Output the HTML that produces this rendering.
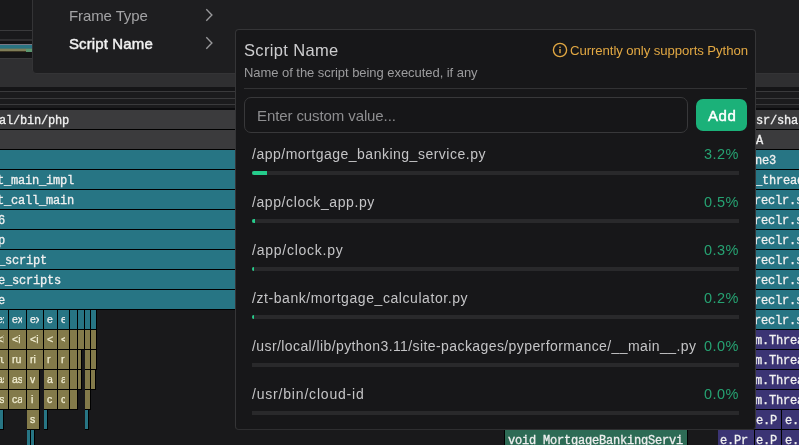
<!DOCTYPE html>
<html><head><meta charset="utf-8">
<style>
html,body{margin:0;padding:0;}
body{width:799px;height:445px;overflow:hidden;position:relative;background:#19191b;font-family:"Liberation Sans",sans-serif;}
.abs{position:absolute;}
.hl{position:absolute;left:0;width:799px;height:1px;background:#3a3a3c;}
.b{position:absolute;height:19px;border-right:1px solid #000;border-bottom:1px solid #000;}
.b .m{position:absolute;top:2px;height:19px;line-height:19px;white-space:pre;font-family:"Liberation Mono",monospace;font-size:12px;letter-spacing:-0.2px;color:#f0f0f0;will-change:transform;-webkit-text-stroke:0.3px #f0f0f0;}
.b .s{position:absolute;top:0px;height:19px;line-height:19px;white-space:pre;overflow:hidden;font-family:"Liberation Sans",sans-serif;font-size:10.5px;color:#f0f0f0;will-change:transform;-webkit-text-stroke:0.25px #f0f0f0;}
.b .o{color:#f2eed2;-webkit-text-stroke-color:#f2eed2;}
.b{overflow:hidden;}
#menu{position:absolute;left:32px;top:-10px;width:800px;height:82px;background:#1e1e20;border:1px solid #343436;border-radius:4px;}
.mi{position:absolute;left:69px;font-size:15px;white-space:nowrap;}
.chev{position:absolute;left:204px;}
#pop{position:absolute;left:235px;top:29px;width:519px;height:399px;background:#171719;border:1px solid #353537;border-bottom-color:#2e2e30;border-radius:4px;}
.t{position:absolute;white-space:nowrap;will-change:transform;}
.row{position:absolute;left:252px;width:487px;height:48px;}
.row .nm{position:absolute;left:0;font-size:14.5px;color:#c4c4c6;white-space:nowrap;}
.row .pc{position:absolute;right:0;font-size:14.5px;color:#26a272;white-space:nowrap;}
.row .tr{position:absolute;left:0;width:487px;height:4px;background:#29292b;border-radius:2px;overflow:hidden;}
.row .fl{position:absolute;left:0;top:0;height:4px;background:#25cd8c;border-radius:2px;}
</style></head><body>
<!-- minimap lines -->
<div class="hl" style="top:30px"></div>
<div class="hl" style="top:39px;height:2px;background:#2f2f31"></div>
<div class="abs" style="left:0;top:41px;width:799px;height:3px;background:#141416"></div>
<div class="hl" style="top:44px;background:#7a7884"></div>
<div class="abs" style="left:0;top:45px;width:799px;height:3px;background:#2a7482"></div>
<div class="abs" style="left:0;top:48px;width:799px;height:1px;background:#4a766e"></div>
<div class="abs" style="left:0;top:49px;width:26px;height:2px;background:#7f7d58"></div>
<div class="abs" style="left:26px;top:49px;width:10px;height:3px;background:#5b9670"></div>
<div class="abs" style="left:0;top:51px;width:26px;height:1px;background:#3a3422"></div>
<div class="abs" style="left:0;top:52px;width:799px;height:6px;background:#141416"></div>
<div class="hl" style="top:58px"></div>
<div class="abs" style="left:0;top:59px;width:799px;height:28px;background:#2f2f31"></div>
<div class="abs" style="left:0;top:87px;width:799px;height:22px;background:#1b1b1d"></div>
<div class="abs" style="left:0;top:87px;width:799px;height:4px;background:#151517"></div>
<div class="hl" style="top:91px"></div>
<div class="hl" style="top:98px"></div>
<div class="hl" style="top:104px"></div>
<div class="abs" style="left:0;top:108px;width:799px;height:2px;background:#0c0c0e"></div>
<div class="abs" style="left:0;top:110px;width:799px;height:335px;background:#19191b"></div>
<!-- flame blocks -->
<div class="b" style="left:-10px;top:110px;width:245px;background:#3b3b3d"><span class="m" style="left:9px">al/bin/php</span></div>
<div class="b" style="left:-10px;top:130px;width:245px;background:#3b3b3d"></div>
<div class="b" style="left:-10px;top:150px;width:245px;background:#277584"></div>
<div class="b" style="left:-10px;top:170px;width:245px;background:#277584"><span class="m" style="left:7px">t_main_impl</span></div>
<div class="b" style="left:-10px;top:190px;width:245px;background:#277584"><span class="m" style="left:7px">t_call_main</span></div>
<div class="b" style="left:-10px;top:210px;width:245px;background:#277584"><span class="m" style="left:7.5px">6</span></div>
<div class="b" style="left:-10px;top:230px;width:245px;background:#277584"><span class="m" style="left:7.5px">p</span></div>
<div class="b" style="left:-10px;top:250px;width:245px;background:#277584"><span class="m" style="left:7.5px">_script</span></div>
<div class="b" style="left:-10px;top:270px;width:245px;background:#277584"><span class="m" style="left:7.5px">e_scripts</span></div>
<div class="b" style="left:-10px;top:290px;width:245px;background:#277584"><span class="m" style="left:7.5px">e</span></div>
<div class="b" style="left:-10px;top:310px;width:18px;background:#277584"><span class="s" style="left:6.5px;width:6.5px">ex</span></div>
<div class="b" style="left:9px;top:310px;width:17px;background:#277584"><span class="s" style="left:2.5px;width:9.5px">ex</span></div>
<div class="b" style="left:27px;top:310px;width:16px;background:#277584"><span class="s" style="left:2.5px;width:8.5px">ex</span></div>
<div class="b" style="left:44px;top:310px;width:13px;background:#277584"><span class="s" style="left:2.5px;width:5.5px">e</span></div>
<div class="b" style="left:58px;top:310px;width:11px;background:#277584"><span class="s" style="left:2.5px;width:3.5px">e</span></div>
<div class="b" style="left:70px;top:310px;width:7px;background:#277584"></div>
<div class="b" style="left:78px;top:310px;width:6px;background:#277584"></div>
<div class="b" style="left:85px;top:310px;width:5px;background:#277584"></div>
<div class="b" style="left:91px;top:310px;width:5px;background:#277584"></div>
<div class="b" style="left:-10px;top:330px;width:18px;background:#837a4a"><span class="s o" style="left:6.5px;width:6.5px">&lt;i</span></div>
<div class="b" style="left:9px;top:330px;width:17px;background:#837a4a"><span class="s o" style="left:2.5px;width:9.5px">&lt;i</span></div>
<div class="b" style="left:27px;top:330px;width:16px;background:#837a4a"><span class="s o" style="left:2.5px;width:8.5px">&lt;i</span></div>
<div class="b" style="left:44px;top:330px;width:13px;background:#837a4a"><span class="s o" style="left:2.5px;width:5.5px">&lt;</span></div>
<div class="b" style="left:58px;top:330px;width:11px;background:#837a4a"><span class="s o" style="left:2.5px;width:3.5px">&lt;</span></div>
<div class="b" style="left:70px;top:330px;width:7px;background:#837a4a"></div>
<div class="b" style="left:78px;top:330px;width:6px;background:#837a4a"></div>
<div class="b" style="left:85px;top:330px;width:5px;background:#837a4a"></div>
<div class="b" style="left:91px;top:330px;width:5px;background:#837a4a"></div>
<div class="b" style="left:-10px;top:350px;width:18px;background:#837a4a"><span class="s o" style="left:6.5px;width:6.5px">ru</span></div>
<div class="b" style="left:9px;top:350px;width:17px;background:#837a4a"><span class="s o" style="left:2.5px;width:9.5px">ru</span></div>
<div class="b" style="left:27px;top:350px;width:16px;background:#837a4a"><span class="s o" style="left:2.5px;width:8.5px">ri</span></div>
<div class="b" style="left:44px;top:350px;width:13px;background:#837a4a"><span class="s o" style="left:2.5px;width:5.5px">r</span></div>
<div class="b" style="left:58px;top:350px;width:11px;background:#837a4a"><span class="s o" style="left:2.5px;width:3.5px">r</span></div>
<div class="b" style="left:70px;top:350px;width:7px;background:#837a4a"></div>
<div class="b" style="left:78px;top:350px;width:3px;background:#837a4a"></div>
<div class="b" style="left:85px;top:350px;width:5px;background:#837a4a"></div>
<div class="b" style="left:91px;top:350px;width:5px;background:#837a4a"></div>
<div class="b" style="left:-10px;top:370px;width:18px;background:#837a4a"><span class="s o" style="left:6.5px;width:6.5px">as</span></div>
<div class="b" style="left:9px;top:370px;width:17px;background:#837a4a"><span class="s o" style="left:2.5px;width:9.5px">as</span></div>
<div class="b" style="left:27px;top:370px;width:12px;background:#837a4a"><span class="s o" style="left:2.5px;width:4.5px">v</span></div>
<div class="b" style="left:44px;top:370px;width:13px;background:#837a4a"><span class="s o" style="left:2.5px;width:5.5px">a</span></div>
<div class="b" style="left:58px;top:370px;width:11px;background:#837a4a"><span class="s o" style="left:2.5px;width:3.5px">a</span></div>
<div class="b" style="left:70px;top:370px;width:7px;background:#837a4a"></div>
<div class="b" style="left:78px;top:370px;width:3px;background:#837a4a"></div>
<div class="b" style="left:85px;top:370px;width:5px;background:#837a4a"></div>
<div class="b" style="left:91px;top:370px;width:4px;background:#837a4a"></div>
<div class="b" style="left:-10px;top:390px;width:18px;background:#837a4a"><span class="s o" style="left:6.5px;width:6.5px">is</span></div>
<div class="b" style="left:9px;top:390px;width:17px;background:#837a4a"><span class="s o" style="left:2.5px;width:9.5px">ca</span></div>
<div class="b" style="left:27px;top:390px;width:12px;background:#837a4a"><span class="s o" style="left:4px;width:3px">i</span></div>
<div class="b" style="left:44px;top:390px;width:13px;background:#837a4a"><span class="s o" style="left:2.5px;width:5.5px">c</span></div>
<div class="b" style="left:58px;top:390px;width:11px;background:#837a4a"><span class="s o" style="left:2.5px;width:3.5px">c</span></div>
<div class="b" style="left:70px;top:390px;width:7px;background:#837a4a"></div>
<div class="b" style="left:85px;top:390px;width:5px;background:#837a4a"></div>
<div class="b" style="left:-10px;top:410px;width:13px;background:#277584"></div>
<div class="b" style="left:27px;top:410px;width:12px;background:#837a4a"><span class="s o" style="left:2.5px;width:4.5px">s</span></div>
<div class="b" style="left:44px;top:410px;width:3px;background:#277584"></div>
<div class="b" style="left:85px;top:410px;width:3px;background:#277584"></div>
<div class="b" style="left:27px;top:430px;width:3px;background:#277584"></div>
<div class="b" style="left:31px;top:430px;width:3px;background:#277584"></div>
<div class="abs" style="left:504px;top:430px;width:1px;height:20px;background:#000"></div>
<div class="b" style="left:505px;top:430px;width:182px;background:#2d6b55"><span class="m" style="left:2.5px">void MortgageBankingServi</span></div>
<div class="b" style="left:718px;top:430px;width:36px;background:#3b3474"><span class="m" style="left:1.5px">e.Pr</span></div>
<div class="b" style="left:745px;top:110px;width:65px;background:#3b3b3d"><span class="m" style="left:11px">sr/share</span></div>
<div class="b" style="left:745px;top:130px;width:65px;background:#3b3b3d"><span class="m" style="left:11px">A</span></div>
<div class="b" style="left:745px;top:150px;width:65px;background:#277584"><span class="m" style="left:10px">ne3</span></div>
<div class="b" style="left:745px;top:170px;width:65px;background:#277584"><span class="m" style="left:10px">_thread</span></div>
<div class="b" style="left:745px;top:190px;width:65px;background:#277584"><span class="m" style="left:8.5px">reclr.so</span></div>
<div class="b" style="left:745px;top:210px;width:65px;background:#277584"><span class="m" style="left:8.5px">reclr.so</span></div>
<div class="b" style="left:745px;top:230px;width:65px;background:#277584"><span class="m" style="left:8.5px">reclr.so</span></div>
<div class="b" style="left:745px;top:250px;width:65px;background:#277584"><span class="m" style="left:8.5px">reclr.so</span></div>
<div class="b" style="left:745px;top:270px;width:65px;background:#277584"><span class="m" style="left:8.5px">reclr.so</span></div>
<div class="b" style="left:745px;top:290px;width:65px;background:#277584"><span class="m" style="left:8.5px">reclr.so</span></div>
<div class="b" style="left:745px;top:310px;width:65px;background:#277584"><span class="m" style="left:8.5px">reclr.so</span></div>
<div class="b" style="left:745px;top:330px;width:65px;background:#3b3474"><span class="m" style="left:9.5px">m.Thread</span></div>
<div class="b" style="left:745px;top:350px;width:65px;background:#3b3474"><span class="m" style="left:9.5px">m.Thread</span></div>
<div class="b" style="left:745px;top:370px;width:65px;background:#3b3474"><span class="m" style="left:9.5px">m.Thread</span></div>
<div class="b" style="left:745px;top:390px;width:65px;background:#3b3474"><span class="m" style="left:9.5px">m.Thread</span></div>
<div class="b" style="left:745px;top:410px;width:36px;background:#3b3474"><span class="m" style="left:10.5px">e.P</span></div>
<div class="b" style="left:782px;top:410px;width:28px;background:#3b3474"><span class="m" style="left:2.5px">e.Pr</span></div>
<div class="b" style="left:755px;top:430px;width:26px;background:#3b3474"><span class="m" style="left:0.5px">e.P</span></div>
<div class="b" style="left:782px;top:430px;width:28px;background:#3b3474"><span class="m" style="left:2.5px">e.Pr</span></div>

<div id="menu"></div>
<div class="t" style="left:69px;top:8px;font-size:15px;line-height:1;color:#a3a3a5;font-weight:400;letter-spacing:-0.1px;">Frame Type</div>
<div class="t" style="left:69px;top:35.8px;font-size:15px;line-height:1;color:#f2f2f2;font-weight:400;letter-spacing:0.12px;-webkit-text-stroke:0.45px #f2f2f2;">Script Name</div>
<svg class="abs" style="left:203px;top:7px" width="12" height="16" viewBox="0 0 12 16"><path d="M3.3 2.3 L8.9 8 L3.3 13.7" fill="none" stroke="#9a9a9c" stroke-width="1.35"/></svg>
<svg class="abs" style="left:203px;top:35px" width="12" height="16" viewBox="0 0 12 16"><path d="M3.3 2.3 L8.9 8 L3.3 13.7" fill="none" stroke="#9a9a9c" stroke-width="1.35"/></svg>
<div id="pop"></div>
<div class="t" style="left:244px;top:42.03px;font-size:16.5px;line-height:1;color:#cdcdcf;font-weight:400;letter-spacing:0.35px;">Script Name</div>
<div class="t" style="left:244px;top:66px;font-size:13px;line-height:1;color:#9c9c9e;font-weight:400;letter-spacing:-0.05px;">Name of the script being executed, if any</div>
<svg class="abs" style="left:552px;top:42px" width="16" height="16" viewBox="0 0 16 16"><circle cx="8" cy="8" r="6.6" fill="none" stroke="#e2a843" stroke-width="1.35"/><rect x="7.3" y="7" width="1.4" height="4.2" fill="#e2a843"/><rect x="7.3" y="4.6" width="1.4" height="1.4" fill="#e2a843"/></svg>
<div class="t" style="left:570px;top:44.33px;font-size:13.2px;line-height:1;color:#e2a843;font-weight:400;letter-spacing:-0.08px;">Currently only supports Python</div>
<div class="abs" style="left:244px;top:88px;width:503px;height:1px;background:#323234"></div>
<div class="abs" style="left:244px;top:97px;width:442px;height:34px;border:1px solid #38383a;border-radius:7px;background:#161618"></div>
<div class="t" style="left:257px;top:108.3px;font-size:15px;line-height:1;color:#8e8e90;font-weight:400;letter-spacing:-0.1px;">Enter custom value...</div>
<div class="abs" style="left:696px;top:99px;width:51px;height:32px;border-radius:7px;background:#1bb179"></div>
<div class="t" style="left:708px;top:108.3px;font-size:15px;line-height:1;color:#ffffff;font-weight:400;letter-spacing:0.6px;-webkit-text-stroke:0.45px #ffffff;">Add</div>
<div class="t" style="left:251.5px;top:147.15px;font-size:14px;line-height:1;color:#c4c4c6;font-weight:400;letter-spacing:0.5px;">/app/mortgage_banking_service.py</div>
<div class="t" style="left:739px;top:146.73px;font-size:14.5px;line-height:1;color:#26a272;font-weight:400;letter-spacing:0.5px;transform:translateX(-100%);">3.2%</div>
<div class="abs" style="left:252px;top:171px;width:487px;height:4px;background:#29292b"></div>
<div class="abs" style="left:252px;top:171px;width:15px;height:4px;background:#25cd8c;border-radius:2px 0 0 2px"></div>
<div class="t" style="left:251.5px;top:195.15px;font-size:14px;line-height:1;color:#c4c4c6;font-weight:400;letter-spacing:0.59px;">/app/clock_app.py</div>
<div class="t" style="left:739px;top:194.73px;font-size:14.5px;line-height:1;color:#26a272;font-weight:400;letter-spacing:0.5px;transform:translateX(-100%);">0.5%</div>
<div class="abs" style="left:252px;top:219px;width:487px;height:4px;background:#29292b"></div>
<div class="abs" style="left:252px;top:219px;width:3px;height:4px;background:#25cd8c;border-radius:2px 0 0 2px"></div>
<div class="t" style="left:251.5px;top:243.15px;font-size:14px;line-height:1;color:#c4c4c6;font-weight:400;letter-spacing:0.75px;">/app/clock.py</div>
<div class="t" style="left:739px;top:242.73px;font-size:14.5px;line-height:1;color:#26a272;font-weight:400;letter-spacing:0.5px;transform:translateX(-100%);">0.3%</div>
<div class="abs" style="left:252px;top:267px;width:487px;height:4px;background:#29292b"></div>
<div class="abs" style="left:252px;top:267px;width:2px;height:4px;background:#25cd8c;border-radius:2px 0 0 2px"></div>
<div class="t" style="left:251.5px;top:291.15px;font-size:14px;line-height:1;color:#c4c4c6;font-weight:400;letter-spacing:0.57px;">/zt-bank/mortgage_calculator.py</div>
<div class="t" style="left:739px;top:290.73px;font-size:14.5px;line-height:1;color:#26a272;font-weight:400;letter-spacing:0.5px;transform:translateX(-100%);">0.2%</div>
<div class="abs" style="left:252px;top:315px;width:487px;height:4px;background:#29292b"></div>
<div class="abs" style="left:252px;top:315px;width:2px;height:4px;background:#25cd8c;border-radius:2px 0 0 2px"></div>
<div class="t" style="left:251.5px;top:339.15px;font-size:14px;line-height:1;color:#c4c4c6;font-weight:400;letter-spacing:0.41px;">/usr/local/lib/python3.11/site-packages/pyperformance/__main__.py</div>
<div class="t" style="left:739px;top:338.73px;font-size:14.5px;line-height:1;color:#26a272;font-weight:400;letter-spacing:0.5px;transform:translateX(-100%);">0.0%</div>
<div class="abs" style="left:252px;top:363px;width:487px;height:4px;background:#29292b"></div>
<div class="t" style="left:251.5px;top:387.15px;font-size:14px;line-height:1;color:#c4c4c6;font-weight:400;letter-spacing:0.81px;">/usr/bin/cloud-id</div>
<div class="t" style="left:739px;top:386.73px;font-size:14.5px;line-height:1;color:#26a272;font-weight:400;letter-spacing:0.5px;transform:translateX(-100%);">0.0%</div>
<div class="abs" style="left:252px;top:411px;width:487px;height:4px;background:#29292b"></div>
</body></html>
